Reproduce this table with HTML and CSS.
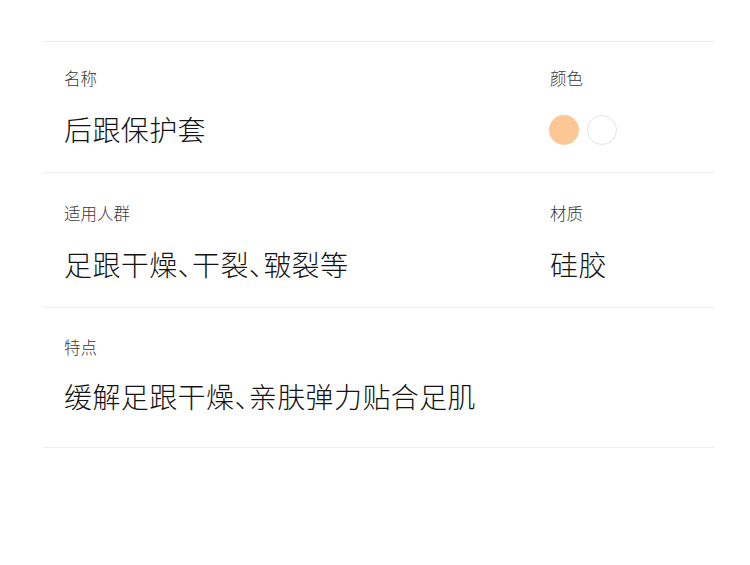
FILE: index.html
```html
<!DOCTYPE html>
<html lang="zh-CN">
<head>
<meta charset="utf-8">
<link rel="stylesheet" href="styles.css">
</head>
<body>
<div class="spec">
  <div class="row row-1">
    <div class="cell">
      <div class="label">名称</div>
      <div class="value">后跟保护套</div>
    </div>
    <div class="cell">
      <div class="label">颜色</div>
      <div class="value swatches">
        <span class="swatch swatch-peach"></span>
        <span class="swatch swatch-white"></span>
      </div>
    </div>
  </div>
  <div class="row row-2">
    <div class="cell">
      <div class="label">适用人群</div>
      <div class="value">足跟干燥、干裂、皲裂等</div>
    </div>
    <div class="cell">
      <div class="label">材质</div>
      <div class="value">硅胶</div>
    </div>
  </div>
  <div class="row row-3">
    <div class="cell">
      <div class="label">特点</div>
      <div class="value">缓解足跟干燥、亲肤弹力贴合足肌</div>
    </div>
  </div>
</div>
</body>
</html>
```
FILE: styles.css
```css
html, body {
  margin: 0;
  padding: 0;
  background: #ffffff;
}
body {
  font-family: "Noto Sans CJK SC", "Noto Sans", sans-serif;
  color: #222;
}
.spec {
  margin: 41px 36px 0 44px;
  border-bottom: 1px solid #ececec;
}
.row {
  display: grid;
  grid-template-columns: 486px 1fr;
  border-top: 1px solid #ececec;
}
.label {
  font-size: 16.5px;
  line-height: 20px;
  font-weight: 300;
  color: #383838;
}
.value {
  font-size: 28px;
  line-height: 36px;
  font-weight: 300;
  letter-spacing: 0.4px;
  color: #141414;
  font-feature-settings: "halt";
}
.row-1 { padding: 26px 0 25px 20px; }
.row-1 .value { margin-top: 23px; }
.row-2 { padding: 30px 0 25px 20px; }
.row-2 .value { margin-top: 23px; }
.row-3 { padding: 29px 0 33px 20px; }
.row-3 .value { margin-top: 21px; }
.row-1 .swatches { margin-top: 25px; height: 34px; }
.swatches {
  display: flex;
  align-items: center;
  gap: 8px;
  margin-left: -1px;
}
.swatch {
  display: block;
  width: 30px;
  height: 30px;
  border-radius: 50%;
  box-sizing: border-box;
}
.swatch-peach { background: #fcc695; }
.swatch-white { background: #fff; border: 1px solid #e3e3e3; }
```
